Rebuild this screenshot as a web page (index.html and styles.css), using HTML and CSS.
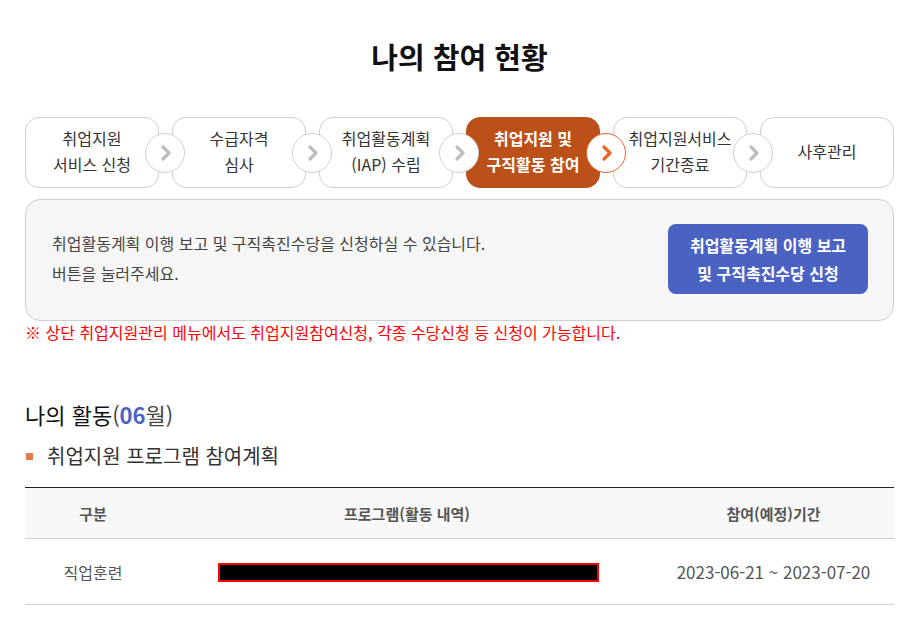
FILE: index.html
```html
<!DOCTYPE html>
<html lang="ko">
<head>
    <meta charset="UTF-8">
    <meta name="viewport" content="width=device-width, initial-scale=1.0">
    <title>나의 참여 현황</title>
    <link rel="stylesheet" href="styles.css">
</head>
<body>
    <div class="container">
        <h1 class="page-title">나의 참여 현황</h1>

        <ol class="steps">
            <li class="step">
                <span>취업지원<br>서비스 신청</span>
                <i class="step-arrow"><svg viewBox="0 0 12 16" width="12" height="16"><polyline points="3,2 9,8 3,14"/></svg></i>
            </li>
            <li class="step">
                <span>수급자격<br>심사</span>
                <i class="step-arrow"><svg viewBox="0 0 12 16" width="12" height="16"><polyline points="3,2 9,8 3,14"/></svg></i>
            </li>
            <li class="step">
                <span>취업활동계획<br>(IAP) 수립</span>
                <i class="step-arrow"><svg viewBox="0 0 12 16" width="12" height="16"><polyline points="3,2 9,8 3,14"/></svg></i>
            </li>
            <li class="step active">
                <span>취업지원 및<br>구직활동 참여</span>
                <i class="step-arrow"><svg viewBox="0 0 12 16" width="12" height="16"><polyline points="3,2 9,8 3,14"/></svg></i>
            </li>
            <li class="step">
                <span>취업지원서비스<br>기간종료</span>
                <i class="step-arrow"><svg viewBox="0 0 12 16" width="12" height="16"><polyline points="3,2 9,8 3,14"/></svg></i>
            </li>
            <li class="step">
                <span>사후관리</span>
            </li>
        </ol>

        <div class="info-box">
            <div class="info-text">
                <p>취업활동계획 이행 보고 및 구직촉진수당을 신청하실 수 있습니다.</p>
                <p>버튼을 눌러주세요.</p>
            </div>
            <button class="apply-button">취업활동계획 이행 보고<br>및 구직촉진수당 신청</button>
        </div>
        <p class="notice">※ 상단 취업지원관리 메뉴에서도 취업지원참여신청, 각종 수당신청 등 신청이 가능합니다.</p>

        <h2 class="section-title">나의 활동<span class="paren">(</span><strong>06</strong><span class="paren">월)</span></h2>
        <h3 class="sub-title">취업지원 프로그램 참여계획</h3>

        <table class="plan-table">
            <colgroup>
                <col class="col-type">
                <col class="col-program">
                <col class="col-period">
            </colgroup>
            <thead>
                <tr>
                    <th>구분</th>
                    <th>프로그램(활동 내역)</th>
                    <th>참여(예정)기간</th>
                </tr>
            </thead>
            <tbody>
                <tr>
                    <td>직업훈련</td>
                    <td class="program-cell"><span class="redacted"></span></td>
                    <td class="period">2023-06-21 ~ 2023-07-20</td>
                </tr>
            </tbody>
        </table>
    </div>
</body>
</html>
```

FILE: styles.css
```css
* {
    margin: 0;
    padding: 0;
    box-sizing: border-box;
}

body {
    font-family: "Noto Sans CJK KR", "Noto Sans", sans-serif;
    color: #333;
    background: #fff;
}

.container {
    width: 869px;
    margin-left: 25px;
    padding-top: 34px;
}

.page-title {
    text-align: center;
    font-size: 29px;
    font-weight: 700;
    color: #111;
    line-height: 44px;
    margin-bottom: 39px;
}

/* 단계 표시 */
.steps {
    list-style: none;
    display: grid;
    grid-template-columns: repeat(6, 1fr);
    gap: 13px;
}

.step {
    position: relative;
    height: 71px;
    border: 1px solid #cfcfcf;
    border-radius: 14px;
    display: flex;
    align-items: center;
    justify-content: center;
    text-align: center;
    font-size: 16px;
    line-height: 26px;
    color: #333;
    background: #fff;
    padding-bottom: 3px;
}

.step.active {
    background: #bb5019;
    border-color: #bb5019;
    color: #fff;
    font-weight: 700;
}

.step-arrow {
    position: absolute;
    top: 50%;
    right: -27px;
    width: 40px;
    height: 40px;
    margin-top: -20px;
    border: 1px solid #cfcfcf;
    border-radius: 50%;
    background: #fff;
    display: flex;
    align-items: center;
    justify-content: center;
    z-index: 2;
}

.step-arrow svg {
    fill: none;
    stroke: #bdbdbd;
    stroke-width: 3.2;
    stroke-linecap: round;
    stroke-linejoin: round;
    margin-left: 2px;
}

.step.active .step-arrow {
    border-color: #e8662a;
}

.step.active .step-arrow svg {
    stroke: #e8662a;
}

/* 안내 박스 */
.info-box {
    margin-top: 11px;
    height: 122px;
    background: #f6f6f6;
    border: 1px solid #cfcfcf;
    border-radius: 15px;
    display: flex;
    align-items: center;
    justify-content: space-between;
    padding: 0 25px 0 26px;
}

.info-text {
    margin-top: -4px;
}

.info-text p {
    font-size: 16px;
    line-height: 30px;
    color: #444;
}

.apply-button {
    width: 200px;
    height: 70px;
    border: none;
    border-radius: 8px;
    background: #4a63c2;
    color: #fff;
    font-family: inherit;
    font-size: 16px;
    font-weight: 700;
    line-height: 28px;
    cursor: pointer;
    margin-top: -2px;
}

.notice {
    margin-top: 0;
    font-size: 16px;
    line-height: 22px;
    color: #f00;
}

/* 나의 활동 */
.section-title {
    margin-top: 56px;
    font-size: 22px;
    font-weight: 400;
    line-height: 30px;
    color: #111;
}

.section-title .paren {
    color: #444;
}

.section-title strong {
    color: #4a63c2;
    font-weight: 700;
}

.sub-title {
    margin-top: 12px;
    font-size: 20px;
    font-weight: 400;
    line-height: 30px;
    color: #333;
    display: flex;
    align-items: center;
    gap: 14px;
}

.sub-title::before {
    content: "";
    width: 7px;
    height: 7px;
    background: #e0784a;
    margin-left: 1px;
}

.plan-table {
    width: 100%;
    margin-top: 16px;
    border-collapse: collapse;
    border-top: 1px solid #222;
}

.col-type {
    width: 136px;
}

.col-period {
    width: 241px;
}

.plan-table th {
    height: 51px;
    background: #f8f8f8;
    font-size: 15px;
    font-weight: 700;
    color: #555;
    border-bottom: 1px solid #d0d0d0;
}

.plan-table td {
    height: 66px;
    text-align: center;
    font-size: 16px;
    color: #555;
    border-bottom: 1px solid #d0d0d0;
}

.plan-table td.period {
    font-size: 17px;
}

.program-cell {
    text-align: left !important;
    padding-left: 57px;
}

.redacted {
    display: block;
    width: 381px;
    height: 19px;
    background: #000;
    border: 2px solid #f00;
    margin-top: 1px;
}
```
